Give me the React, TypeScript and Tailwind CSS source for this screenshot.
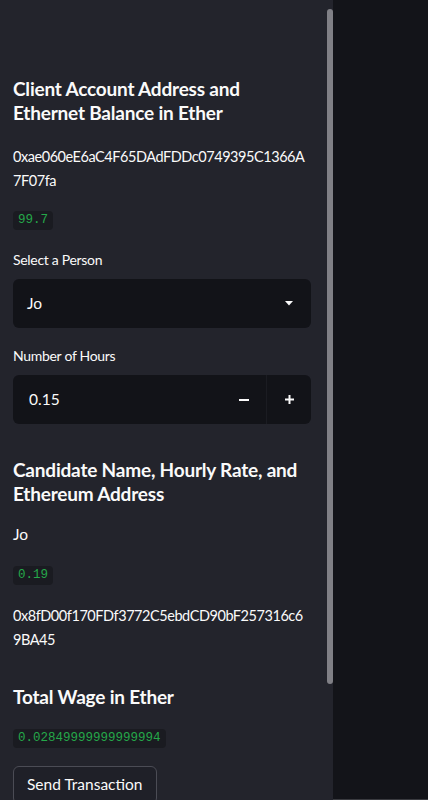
import React from "react";

const Code: React.FC<{ value: string }> = ({ value }) => (
  <div className="flex">
    <span className="h-[19px] px-[5px] rounded-[4px] bg-[#1a1b21] text-[#25a84a] text-[12.5px] leading-[19px] font-['Liberation_Mono',monospace]">
      {value}
    </span>
  </div>
);

const Address: React.FC<{ lines: string[]; className?: string }> = ({ lines, className }) => (
  <p className={`text-[14.5px] leading-[24px] tracking-[-0.45px] whitespace-nowrap ${className ?? ""}`}>
    {lines.map((l, i) => (
      <span key={i} className="block">
        {l}
      </span>
    ))}
  </p>
);

const App: React.FC = () => {
  return (
    <div className="flex h-[800px] w-[428px] overflow-hidden bg-[#131419] font-['Lato',sans-serif] text-[#fafafa]">
      <div className="relative w-[333px] shrink-0 bg-[#23242c]">
        <div className="flex w-[311px] flex-col pl-[13px] pt-[77px]">
          <h3 className="text-[19px] leading-[24px] font-bold tracking-[-0.2px]">
            Client Account Address and Ethernet Balance in Ether
          </h3>
          <Address
            className="mt-[20px]"
            lines={["0xae060eE6aC4F65DAdFDDc0749395C1366A", "7F07fa"]}
          />
          <div className="mt-[18px]">
            <Code value="99.7" />
          </div>

          <label className="mt-[20px] text-[14px] leading-[20px] tracking-[-0.3px]">
            Select a Person
          </label>
          <div className="mt-[9px] flex h-[49px] items-center justify-between rounded-[6px] bg-[#121318] pl-[14px] pr-[18px]">
            <span className="text-[15.5px]">Jo</span>
            <svg width="8" height="5" viewBox="0 0 8 5">
              <path d="M0 0h8L4 4.5z" fill="#fafafa" />
            </svg>
          </div>

          <label className="mt-[18px] text-[14px] leading-[20px] tracking-[-0.3px]">
            Number of Hours
          </label>
          <div className="mt-[9px] flex h-[49px] rounded-[6px] bg-[#121318]">
            <div className="flex flex-1 items-center pl-[16px] text-[15.5px]">
              0.15
            </div>
            <div className="flex w-[45px] items-center justify-center border-r border-[#1b1c22]">
              <svg width="10" height="2" viewBox="0 0 10 2">
                <rect width="10" height="2" fill="#fafafa" />
              </svg>
            </div>
            <div className="flex w-[44px] items-center justify-center">
              <svg width="9" height="9" viewBox="0 0 9 9">
                <rect y="3.5" width="9" height="2" fill="#fafafa" />
                <rect x="3.5" width="2" height="9" fill="#fafafa" />
              </svg>
            </div>
          </div>

          <h3 className="mt-[34px] text-[19px] leading-[24px] font-bold tracking-[-0.2px]">
            Candidate Name, Hourly Rate, and Ethereum Address
          </h3>
          <p className="mt-[16px] text-[15.5px] leading-[24px]">Jo</p>
          <div className="mt-[20px]">
            <Code value="0.19" />
          </div>
          <Address
            className="mt-[19px]"
            lines={["0x8fD00f170FDf3772C5ebdCD90bF257316c6", "9BA45"]}
          />

          <h3 className="mt-[33px] text-[19px] leading-[24px] font-bold tracking-[-0.2px]">
            Total Wage in Ether
          </h3>
          <div className="mt-[20px]">
            <Code value="0.02849999999999994" />
          </div>
          <div className="mt-[18px] flex">
            <button className="h-[38px] rounded-[6px] border border-[#4b4c55] bg-[#1f2028] px-[13px] text-[15.5px] text-[#fafafa]">
              Send Transaction
            </button>
          </div>
        </div>
        <div className="absolute left-[327px] top-[9px] h-[675px] w-[6px] rounded-[3px] bg-[#808086]" />
      </div>
      <div className="flex-1 border-b border-[#3a3b40]" />
    </div>
  );
};

export default App;
